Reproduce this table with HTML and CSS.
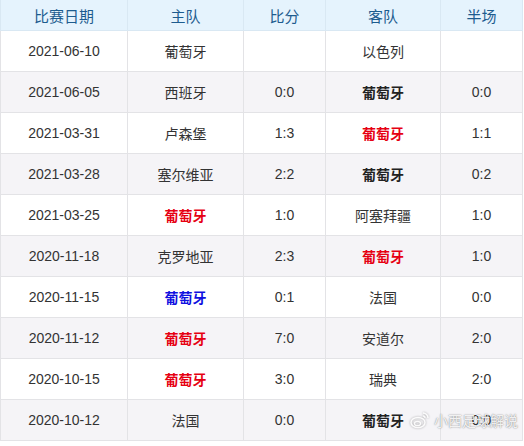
FILE: index.html
```html
<!DOCTYPE html>
<html lang="zh">
<head>
<meta charset="utf-8">
<link rel="stylesheet" href="styles.css">
</head>
<body>
<div class="wrap">
<table class="matches">
  <colgroup>
    <col class="c-date"><col class="c-home"><col class="c-score"><col class="c-away"><col class="c-half">
  </colgroup>
  <thead>
    <tr><th>比赛日期</th><th>主队</th><th>比分</th><th>客队</th><th>半场</th></tr>
  </thead>
  <tbody>
    <tr><td>2021-06-10</td><td>葡萄牙</td><td></td><td>以色列</td><td></td></tr>
    <tr><td>2021-06-05</td><td>西班牙</td><td>0:0</td><td class="b">葡萄牙</td><td>0:0</td></tr>
    <tr><td>2021-03-31</td><td>卢森堡</td><td>1:3</td><td class="b red">葡萄牙</td><td>1:1</td></tr>
    <tr><td>2021-03-28</td><td>塞尔维亚</td><td>2:2</td><td class="b">葡萄牙</td><td>0:2</td></tr>
    <tr><td>2021-03-25</td><td class="b red">葡萄牙</td><td>1:0</td><td>阿塞拜疆</td><td>1:0</td></tr>
    <tr><td>2020-11-18</td><td>克罗地亚</td><td>2:3</td><td class="b red">葡萄牙</td><td>1:0</td></tr>
    <tr><td>2020-11-15</td><td class="b blue">葡萄牙</td><td>0:1</td><td>法国</td><td>0:0</td></tr>
    <tr><td>2020-11-12</td><td class="b red">葡萄牙</td><td>7:0</td><td>安道尔</td><td>2:0</td></tr>
    <tr><td>2020-10-15</td><td class="b red">葡萄牙</td><td>3:0</td><td>瑞典</td><td>2:0</td></tr>
    <tr><td>2020-10-12</td><td>法国</td><td>0:0</td><td class="b">葡萄牙</td><td>0:0</td></tr>
  </tbody>
</table>
<div class="watermark">
  <svg class="wb" width="20" height="18" viewBox="0 0 20 18" aria-hidden="true">
    <ellipse cx="8" cy="11.5" rx="7" ry="5" fill="none" stroke="rgba(255,255,255,0.9)" stroke-width="1.5"/>
    <ellipse cx="7.5" cy="12.5" rx="3" ry="2.2" fill="none" stroke="rgba(255,255,255,0.9)" stroke-width="1.3"/>
    <path d="M13 2 a5 5 0 0 1 5 5" fill="none" stroke="rgba(255,255,255,0.9)" stroke-width="1.4"/>
    <path d="M13 5 a2 2 0 0 1 2 2" fill="none" stroke="rgba(255,255,255,0.9)" stroke-width="1.3"/>
  </svg>
  <span>小西足球解说</span>
</div>
</div>
</body>
</html>
```
FILE: styles.css
```css
html, body {
  margin: 0;
  padding: 0;
  background: #ffffff;
}
.wrap {
  position: relative;
  width: 524px;
  height: 446px;
  overflow: hidden;
}
.matches {
  border-collapse: collapse;
  table-layout: fixed;
  width: 522px;
  font-family: "Liberation Sans", "Noto Sans CJK SC", sans-serif;
  font-size: 14px;
  color: #333333;
}
.c-date { width: 127px; }
.c-home { width: 116px; }
.c-score { width: 82px; }
.c-away { width: 115px; }
.c-half { width: 82px; }
.matches th {
  height: 30px;
  padding: 0;
  background: #e5f3fd;
  color: #1d5c8f;
  font-weight: normal;
  font-size: 15px;
  font-family: "Noto Sans CJK SC", sans-serif;
  border: 1px solid #d9e8f3;
  border-top: none;
  text-align: center;
}
.matches td {
  height: 40px;
  padding: 0;
  text-align: center;
  border: 1px solid #e3e3e6;
}
.matches tbody tr:nth-child(even) td {
  background: #f5f4f7;
}
.matches td.b {
  font-weight: bold;
  color: #222222;
}
.matches td.red { color: #e60012; }
.matches td.blue { color: #1010e0; }
.watermark {
  position: absolute;
  left: 410px;
  top: 410px;
  display: flex;
  align-items: center;
  gap: 4px;
  font-family: "Noto Sans CJK SC", sans-serif;
  font-size: 14px;
  line-height: 20px;
  color: rgba(255, 255, 255, 0.9);
  text-shadow: 0 0 2px rgba(0,0,0,0.35), 0 0 1px rgba(0,0,0,0.3);
  white-space: nowrap;
}
.wb {
  filter: drop-shadow(0 0 1px rgba(0,0,0,0.35));
}
```
